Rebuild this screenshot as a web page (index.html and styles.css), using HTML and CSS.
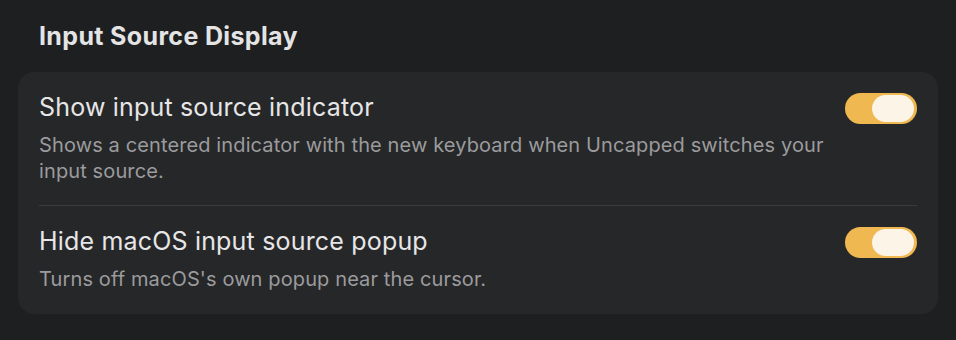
FILE: index.html
```html
<!DOCTYPE html>
<html>
<head>
<meta charset="utf-8">
<link rel="stylesheet" href="styles.css">
</head>
<body>
<div class="page">
  <h2 class="section-title">Input Source Display</h2>
  <div class="card">
    <div class="row">
      <div class="text">
        <div class="title">Show input source indicator</div>
        <div class="desc">Shows a centered indicator with the new keyboard when Uncapped switches your input source.</div>
      </div>
      <div class="toggle on"><div class="knob"></div></div>
    </div>
    <div class="divider"></div>
    <div class="row">
      <div class="text">
        <div class="title">Hide macOS input source popup</div>
        <div class="desc">Turns off macOS's own popup near the cursor.</div>
      </div>
      <div class="toggle on"><div class="knob"></div></div>
    </div>
  </div>
</div>
</body>
</html>
```

FILE: styles.css
```css
html, body {
  margin: 0;
  padding: 0;
  background: #1e1f21;
  width: 956px;
  height: 340px;
  overflow: hidden;
}
body {
  font-family: Inter, "Noto Sans", sans-serif;
  color: #e6e6e7;
}
.page {
  padding: 21px 18px 0 18px;
}
.section-title {
  margin: 0 0 21px 21px;
  font-size: 25px;
  font-weight: 700;
  line-height: 30px;
  letter-spacing: 0.35px;
  color: #e4e4e5;
}
.card {
  background: #262729;
  border-radius: 16px;
  padding: 20px 21px 22px 21px;
}
.row {
  display: flex;
  align-items: flex-start;
  justify-content: space-between;
}
.text {
  flex: 1;
  padding-right: 8px;
}
.title {
  font-size: 25px;
  line-height: 30px;
  letter-spacing: 0.18px;
  color: #e6e6e7;
}
.desc {
  margin-top: 10px;
  font-size: 20px;
  line-height: 26px;
  letter-spacing: 0.12px;
  color: #9b9b9d;
}
.divider {
  height: 1px;
  background: #3a3b3d;
  margin: 21px 0 20px 0;
}
.toggle {
  width: 72px;
  height: 31px;
  border-radius: 16px;
  background: #efb851;
  display: flex;
  align-items: center;
  justify-content: flex-end;
  padding: 0 3px;
  box-sizing: border-box;
  margin-top: 1px;
  flex-shrink: 0;
}
.knob {
  width: 42px;
  height: 27px;
  border-radius: 14px;
  background: #fcf4e6;
}
```
